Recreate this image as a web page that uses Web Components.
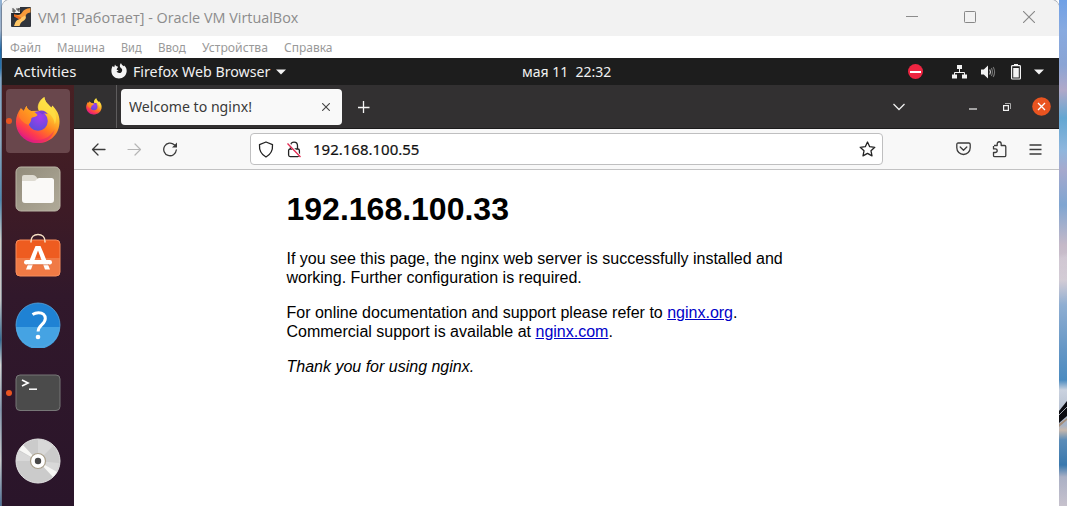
<!DOCTYPE html>
<html lang="ru">
<head>
<meta charset="utf-8">
<title>VM1 [Работает] - Oracle VM VirtualBox</title>
<style>html,body{margin:0;height:100%;overflow:hidden}</style>
</head>
<body>
<vm-desktop></vm-desktop>
<script>
const ICONS = {
  vbox: `<svg width="20" height="20" viewBox="0 0 20 20"><rect width="20" height="20" rx="1" fill="#30343c"/><path d="M1 6l8-3 4 4-2 3-5-1-4 2z" fill="#22252c"/><path d="M19.500 1v4.500c-2 .2-3.500.8-4.300 2.200-.8 1.600-1.700 3-3.700 3.300L6 10.500 3 7.500l4 .5c2 0 3-1 4-2.500C12.500 3 15 1.200 19.500 1z" fill="#f79a3a"/><path d="M14 8.500c1.200 1 1.200 2.500.2 3.800-1.500 1.800-3.700 2.200-4.700 4.200L8.500 19H3l1.300-3.500c1-2.300 3.200-2.500 4.500-3.900z" fill="#ffc766"/><path d="M3 7.300l5.500 2.200 1.500 1.700-1.500 1.300-5.500-3z" fill="#ed6a1d"/><path d="M0 0h9v6H0z" fill="#eee"/><path d="M2 1v4h2V3H2M6 1v2h2V1v4" fill="none" stroke="#333" stroke-width=".9"/></svg>`,
  min: `<svg width="12" height="12" viewBox="0 0 12 12"><path d="M0 5.500h12" stroke="#8c8c8c"/></svg>`,
  max: `<svg width="12" height="12" viewBox="0 0 12 12"><rect x=".5" y=".5" width="11" height="11" rx=".8" fill="none" stroke="#888"/></svg>`,
  close: `<svg width="12" height="12" viewBox="0 0 12 12"><path d="M0 0l12 12M12 0L0 12" stroke="#888" stroke-width="1.1"/></svg>`,
  ffmono: `<svg width="16" height="16" viewBox="0 0 16 16"><path d="M1.7 3.1l1.5 1.1L4 1.600c.7 1.500 1.700 2 3.200 2.200L5.600 6.200c.3.8 1.200 1 2 1-.7 1-1.400 1-2 .9.6 2.200 3.400 2.700 5 .8 1.300-1.900.4-3.300-1-4.200C8.500 3.500 8.600 1.500 10 0c.3 1.500 1.500 2.200 2.600 3.300l.5-.7C15 4.200 15.800 6 15.700 8.300 15.300 12.800 12.200 15.500 8 15.500 3.500 15.500.4 12.200.4 8c0-2 .5-3.500 1.300-4.900z" fill="#f4f4f4"/></svg>`,
  caret: `<svg width="10" height="6" viewBox="0 0 10 6"><path d="M0 .5h10L5 5.500z" fill="#f2f2f2"/></svg>`,
  dnd: `<svg width="16" height="16" viewBox="0 0 16 16"><circle cx="7.500" cy="7.500" r="7.500" fill="#ee2541"/><path d="M2 8h11" stroke="#fff" stroke-width="2"/></svg>`,
  net: `<svg width="15" height="14" viewBox="0 0 15 14"><path d="M7.500 4v4M2.500 10V7.500h10V10" fill="none" stroke="#f2f2f2"/><path d="M5 0h5v4H5zM0 9.500h5v4H0zM10 9.500h5v4h-5z" fill="#f2f2f2"/></svg>`,
  vol: `<svg width="15" height="14" viewBox="0 0 15 14"><path d="M0 4.500h2.800L7 .5v13L2.800 9.500H0z" fill="#f2f2f2"/><path d="M8.700 4.500q1.500 2.500 0 5" fill="none" stroke="#c8c8c8" stroke-width="1.200"/><path d="M10.400 3q2 4 0 8M12.200 2q2.800 5 0 10" fill="none" stroke="#777" stroke-width="1.100"/></svg>`,
  bat: `<svg width="10" height="16" viewBox="0 0 10 16"><path d="M3 0h4v1.500H3z" fill="#f2f2f2"/><rect x=".6" y="1.600" width="8.800" height="13.400" rx=".8" fill="none" stroke="#f2f2f2" stroke-width="1.200"/><path d="M2.200 4h5.600v9.500H2.200z" fill="#f2f2f2"/></svg>`,
  firefox: `<svg width="100%" height="100%" viewBox="0 0 46 48"><defs><linearGradient id="a" x1=".8" y1=".05" x2=".25" y2=".95"><stop offset="0" stop-color="#fff44f"/><stop offset=".32" stop-color="#ffbd2c"/><stop offset=".58" stop-color="#ff7a20"/><stop offset=".8" stop-color="#ff3d4c"/><stop offset="1" stop-color="#e01a86"/></linearGradient><radialGradient id="b" cx=".6" cy=".3" r=".75"><stop offset="0" stop-color="#a43cee"/><stop offset="1" stop-color="#5b4ed9"/></radialGradient><linearGradient id="c" x1="0" y1="1" x2="1" y2="0"><stop offset="0" stop-color="#ff6a2a"/><stop offset=".6" stop-color="#ff9a1f"/><stop offset="1" stop-color="#ffb82e"/></linearGradient></defs><path d="M5.500 11.500l3 2.700L11.200 9c.6 3 2.300 4.600 4.800 5.200L24 14c-2-5 1-11 5.500-14 .6 5 4 7.500 7.200 10.800l1-2C42 13.500 45 18 45 25c0 13-9.500 22-22 22S.5 38 .5 25.500c0-5.500 2-10.200 5-14z" fill="url(#a)"/><path d="M24 14c-3-3.500-.5-10.500 5.500-14 .6 5 4 7.500 7.200 10.800 5 5.200 5.800 11.200 3.500 17.200-1-8-6-14-16.200-14z" fill="#ffe047" opacity=".75"/><circle cx="23" cy="24.500" r="10" fill="url(#b)"/><path d="M23 14.500c5-2 9 1 10 3-2-1-4-1-5.500 0z" fill="#7a3fd8"/><path d="M5.500 11.500l3 2.700L11.200 9c.6 3 2.300 4.600 4.800 5.200 2.500.2 5.500 2 6.500 4.300-1 2.500-6 1.500-6.500 4 .3 2-1.500 5-3 6-2.800-1-8-4-9.500-9z" fill="url(#c)"/><path d="M2 30c3 10 12 14.500 21 14 8-.5 14-5 17-11-2 9-9 14-17.500 14C11 47 4 40 2 30z" fill="#d81b85" opacity=".4"/></svg>`,
  x: `<svg width="8" height="8" viewBox="0 0 8 8"><path d="M.2.2l7.600 7.600M7.800.2L.2 7.800" stroke="#444" stroke-width="1.100"/></svg>`,
  plus: `<svg width="12" height="12" viewBox="0 0 12 12"><path d="M5.500 0v12M0 6.500h11.500" stroke="#f5f5f5" stroke-width="1.300"/></svg>`,
  chev: `<svg width="14" height="8" viewBox="0 0 14 8"><path d="M1.500 1L7 6.500 12.500 1" fill="none" stroke="#eee" stroke-width="1.300"/></svg>`,
  wmin: `<svg width="8" height="2"><path d="M0 1h8" stroke="#f2f2f2" stroke-width="1.200"/></svg>`,
  wres: `<svg width="8" height="8" viewBox="0 0 8 8"><path d="M2 .5h5.500V6" fill="none" stroke="#aaa"/><rect x=".6" y="2.600" width="4.800" height="4.800" fill="none" stroke="#f2f2f2" stroke-width="1.200"/></svg>`,
  wclose: `<svg width="19" height="19" viewBox="0 0 19 19"><circle cx="9.500" cy="9.500" r="9.300" fill="#e95420"/><path d="M6 6l7 7M13 6l-7 7" stroke="#fff" stroke-width="1.300"/></svg>`,
  back: `<svg width="15" height="13" viewBox="0 0 15 13"><path d="M7 1L1.500 6.500 7 12M1.500 6.500H14" fill="none" stroke="#3b3b3b" stroke-width="1.300" stroke-linecap="round" stroke-linejoin="round"/></svg>`,
  fwd: `<svg width="15" height="13" viewBox="0 0 15 13"><path d="M8 1l5.500 5.500L8 12M13.500 6.500H1" fill="none" stroke="#b5b5b5" stroke-width="1.200" stroke-linecap="round" stroke-linejoin="round"/></svg>`,
  reload: `<svg width="16" height="16" viewBox="0 0 16 16"><path d="M12.300 3.800A6.300 6.300 0 1 0 14.300 9" fill="none" stroke="#3b3b3b" stroke-width="1.300" stroke-linecap="round"/><path d="M15 1.500v5H10z" fill="#3b3b3b"/></svg>`,
  shield: `<svg width="16" height="17" viewBox="0 0 16 17"><path d="M8 1l6.500 2.600c.4 5.500-1.500 9.700-6.500 12.400C3 13.300 1.100 9.100 1.500 3.600z" fill="none" stroke="#222" stroke-width="1.300" stroke-linejoin="round"/></svg>`,
  lock: `<svg width="16" height="17" viewBox="0 0 16 17"><rect x="2.600" y="8" width="10.800" height="7.600" rx="1.500" fill="none" stroke="#222" stroke-width="1.300"/><path d="M4.500 8V4.800c0-5 7-5 7 0V8" fill="none" stroke="#222" stroke-width="1.300"/><path d="M2 2l13 14" stroke="#fff" stroke-width="2.500"/><path d="M1.500 2.500l13 13.500" stroke="#e22850" stroke-width="1.300"/></svg>`,
  star: `<svg width="17" height="16" viewBox="0 0 17 16"><path d="M8.500 1l2.200 4.700 5.100.6-3.800 3.500 1 5.100-4.500-2.500L4 14.900l1-5.100L1.200 6.300l5.100-.6z" fill="none" stroke="#222" stroke-width="1.300" stroke-linejoin="round"/></svg>`,
  pocket: `<svg width="15" height="14" viewBox="0 0 15 14"><path d="M2.200 1h10.600q1.400 0 1.400 1.400v3.400a6.700 6.700 0 0 1-13.400 0V2.400Q.8 1 2.200 1z" fill="none" stroke="#3b3b3b" stroke-width="1.300"/><path d="M4.200 5l3.300 3.200L10.800 5" fill="none" stroke="#3b3b3b" stroke-width="1.300" stroke-linecap="round" stroke-linejoin="round"/></svg>`,
  ext: `<svg width="15" height="17" viewBox="0 0 15 17"><path d="M2 4.500h3.200V3c0-3 4-3 4 0v1.500h3.300q1.300 0 1.300 1.300v8.600q0 1.300-1.300 1.300H2.800Q1.500 15.700 1.500 14.400v-2.900h1.600c2.800 0 2.800-3.600 0-3.600H1.500V5" fill="none" stroke="#3b3b3b" stroke-width="1.300" stroke-linejoin="round"/></svg>`,
  menu: `<svg width="13" height="11" viewBox="0 0 13 11"><path d="M.5 1h12M.5 5.500h12M.5 10h12" stroke="#3b3b3b" stroke-width="1.300"/></svg>`,
  files: `<svg width="46" height="46" viewBox="0 0 46 46"><defs><linearGradient id="f" x1="0" y1="0" x2="1" y2="1"><stop offset="0" stop-color="#918b7b"/><stop offset="1" stop-color="#b0aa98"/></linearGradient></defs><rect x="1" y="1" width="44" height="44" rx="5" fill="url(#f)" stroke="#bbb5a6"/><path d="M7 16v-5q0-2 2-2h9q2 0 3 1.500l1.500 2V17z" fill="#dedbd2"/><path d="M7 15h12q1.500 0 2.500-1.500t2.500-1.500h12.500q2.500 0 2.500 2.500V34q0 3-3 3H10q-3 0-3-3z" fill="#faf9f7"/></svg>`,
  store: `<svg width="46" height="44" viewBox="0 0 46 44"><rect x="1" y="7" width="44" height="36" rx="4" fill="#ee5c20"/><path d="M1 25h44v14q0 4-4 4H5q-4 0-4-4z" fill="#f07a45"/><rect x="1" y="7" width="44" height="36" rx="4" fill="none" stroke="#f78e5e"/><path d="M16 9.500V8.500C16 4 19 1.500 23 1.500s7 2.500 7 7v1" fill="none" stroke="#f6dfc4" stroke-width="1.500"/><path d="M20.500 13h5l3.200 7.500L35 36.500h-5l-7-19-7 19h-5l6.300-16z" fill="#fff"/><rect x="9" y="27" width="28" height="4.500" rx="2.200" fill="#fff"/><path d="M12 31.800h22" stroke="#d9683a" stroke-width=".7"/></svg>`,
  help: `<svg width="46" height="46" viewBox="0 0 46 46"><circle cx="23" cy="23" r="22" fill="#1f82d4"/><path d="M1 25a22 22 0 0 0 44 0z" fill="#45a3e3"/><circle cx="23" cy="23" r="22" fill="none" stroke="#55a6df" stroke-width=".8"/><path d="M17.500 12.500q2.800-1.800 6-1.800c4.500 0 6.800 2.500 6.800 5.800 0 6-7.200 6.300-7.200 13" fill="none" stroke="#fff" stroke-width="3"/><circle cx="23" cy="35" r="2.300" fill="#fff"/></svg>`,
  term: `<svg width="46" height="38" viewBox="0 0 46 38"><rect x="1" y="1" width="44" height="35.500" rx="4" fill="#4b4b4b" stroke="#777"/><path d="M7 6l6 3-6 3" fill="none" stroke="#fff" stroke-width="1.700"/><path d="M14 15.200h8" stroke="#fff" stroke-width="1.500"/></svg>`,
  disc: `<svg width="46" height="46" viewBox="0 0 46 46"><circle cx="23" cy="23" r="22" fill="#cbcbcb" stroke="#e4e4e4"/><path d="M23 23L1.500 23A21.500 21.500 0 0 1 4 13zM23 23L23 1.500A21.500 21.500 0 0 1 38 8zM23 23L44 25A21.500 21.500 0 0 1 41 35z" fill="#d8d8d8"/><path d="M23 23L4 12l4-5zM23 23l19 11-4 5z" fill="#f7f7f5"/><circle cx="23" cy="23" r="7.500" fill="#fff" stroke="#aaa08c" stroke-width="1.200"/><circle cx="23" cy="23" r="3.200" fill="#484848"/></svg>`
};

const define = (name, html, ready) => {
  const t = document.createElement('template');
  t.innerHTML = html;
  customElements.define(name, class extends HTMLElement {
    constructor() { super(); this.attachShadow({mode: 'open'}).append(t.content.cloneNode(true)); }
    connectedCallback() { if (ready) ready(this); }
  });
};

/* Icon drawn from the shared set */
define('ui-icon', '', el => {
  el.shadowRoot.innerHTML = '<style>:host{display:block;flex:none;line-height:0}svg{display:block}</style>' + ICONS[el.getAttribute('name')];
});

/* Label that condenses or widens its text to a given width */
define('fit-label', `<style>:host{display:block;flex:none;white-space:pre}span{display:inline-block;transform-origin:0 50%}</style><span><slot></slot></span>`, el => {
  const w = +el.getAttribute('w'), s = el.shadowRoot.querySelector('span');
  el.style.width = w + 'px';
  s.style.transform = `scaleX(${w / s.offsetWidth})`;
});

define('host-titlebar', `<style>
:host{display:flex;align-items:center;height:36px;box-sizing:border-box;background:#f2f2f2;padding:0 24px 2px 9px;font:14.5px "Open Sans",sans-serif;color:#8c8c8c}
fit-label{margin:0 auto 0 7px}.b{display:flex;gap:47px}</style>
<ui-icon name="vbox"></ui-icon><fit-label w="260">VM1 [Работает] - Oracle VM VirtualBox</fit-label>
<div class="b"><ui-icon name="min" style="margin-right:-1px"></ui-icon><ui-icon name="max"></ui-icon><ui-icon name="close"></ui-icon></div>`);

define('host-menu', `<style>:host{display:flex;align-items:center;gap:16px;height:22px;padding:0 8px;background:#fff;font:12px "Noto Sans",sans-serif;color:#999}</style>
<fit-label w="31">Файл</fit-label><fit-label w="48">Машина</fit-label><fit-label w="21">Вид</fit-label><fit-label w="28">Ввод</fit-label><fit-label w="66">Устройства</fit-label><fit-label w="49">Справка</fit-label>`);

define('gnome-bar', `<style>:host{display:grid;grid-template-columns:508px 89px 1fr;align-items:center;height:27px;padding:0 15px 0 12px;background:#1d1d1d;font:14px "Noto Sans",sans-serif;color:#f0f0f0}
div{display:flex;align-items:center}.r{justify-content:flex-end}</style>
<div><fit-label w="62">Activities</fit-label><ui-icon name="ffmono" style="margin:0 6px 2px 35px"></ui-icon><fit-label w="137">Firefox Web Browser</fit-label><ui-icon name="caret" style="margin-left:6px"></ui-icon></div>
<fit-label w="89" style="margin-top:-1px">мая 11  22:32</fit-label>
<div class="r"><ui-icon name="dnd" style="margin-right:28px"></ui-icon><ui-icon name="net" style="margin-right:14px"></ui-icon><ui-icon name="vol" style="margin-right:15px"></ui-icon><ui-icon name="bat" style="margin-right:13px"></ui-icon><ui-icon name="caret"></ui-icon></div>`);

define('dock-item', `<style>:host{display:flex;position:relative;align-items:center;justify-content:center;width:64px;height:64px;flex:none;border-radius:4px}
:host([active]){background:#69474c}:host([running])::before{content:"";position:absolute;left:0;top:29px;width:6px;height:6px;border-radius:50%;background:#e95420}</style><slot></slot>`);

define('app-dock', `<style>:host{display:flex;flex-direction:column;align-items:center;gap:4px;width:72px;flex:none;box-sizing:border-box;padding-top:4px;background:linear-gradient(#482023,#3d1b26 30%,#31182b 50%,#2a152a);overflow:hidden}
.ff{width:46px;height:47px;margin-top:-2px}</style>
<dock-item active running><ui-icon name="firefox" class="ff"></ui-icon></dock-item>
<dock-item><ui-icon name="files"></ui-icon></dock-item>
<dock-item><ui-icon name="store" style="margin-top:-5px"></ui-icon></dock-item>
<dock-item><ui-icon name="help" style="margin-top:-1px"></ui-icon></dock-item>
<dock-item running><ui-icon name="term"></ui-icon></dock-item>
<dock-item><ui-icon name="disc"></ui-icon></dock-item>`);

define('browser-tabs', `<style>:host{display:flex;align-items:center;height:44px;box-sizing:border-box;border-bottom:1px solid #1c1b1c;background:#323031;padding-right:9px;font:14px "Noto Sans",sans-serif}
.pin{display:flex;align-items:center;justify-content:center;width:43px;height:100%;box-sizing:border-box;border-right:1px solid #5e5c5d;padding-right:2px}
.pin ui-icon{width:16px;height:17px}.tab{display:flex;align-items:center;justify-content:space-between;width:221px;height:36px;box-sizing:border-box;margin:0 16px 0 4px;padding:0 12px 0 8px;background:#f9f9f9;border-radius:4px;color:#3a3a3a}</style>
<div class="pin"><ui-icon name="firefox"></ui-icon></div>
<div class="tab"><fit-label w="123">Welcome to nginx!</fit-label><ui-icon name="x"></ui-icon></div>
<ui-icon name="plus" style="margin-right:auto"></ui-icon><ui-icon name="chev" style="margin-right:63px"></ui-icon><ui-icon name="wmin" style="margin:4px 26px 0 0"></ui-icon><ui-icon name="wres" style="margin-right:21px"></ui-icon><ui-icon name="wclose" style="margin-right:-1px"></ui-icon>`);

define('browser-toolbar', `<style>:host{display:flex;align-items:center;height:41px;box-sizing:border-box;border-bottom:1px solid #c2c2c3;background:#f8f8f8;padding:0 17px 0 17px}
.url{display:flex;align-items:center;width:633px;flex:none;height:32px;box-sizing:border-box;border:1px solid #bfbfc0;border-radius:4px;background:#fff;padding:0 6px 0 7px;margin:0 73px 0 72px;font:14px "Noto Sans",sans-serif;color:#111;-webkit-text-stroke:.2px #111}</style>
<ui-icon name="back"></ui-icon><ui-icon name="fwd" style="margin:0 20px 0 21px"></ui-icon><ui-icon name="reload"></ui-icon>
<div class="url"><ui-icon name="shield"></ui-icon><ui-icon name="lock" style="margin:0 11px 0 12px"></ui-icon><fit-label w="106">192.168.100.55</fit-label><ui-icon name="star" style="margin-left:auto"></ui-icon></div>
<ui-icon name="pocket" style="margin-right:21px"></ui-icon><ui-icon name="ext" style="margin-right:22px"></ui-icon><ui-icon name="menu"></ui-icon>`);

define('nginx-page', `<style>:host{display:block;flex:1;background:#fff;overflow:hidden;font:16px/19px "Liberation Sans",Arial,sans-serif;color:#000}
main{width:560px;margin:0 auto}h1{font-size:32px;line-height:37px;margin:21px 0}p{margin:0 0 16px}a{color:#0000c8}</style>
<main><h1>192.168.100.33</h1>
<p>If you see this page, the nginx web server is successfully installed and<br>working. Further configuration is required.</p>
<p>For online documentation and support please refer to <a href="#">nginx.org</a>.<br>Commercial support is available at <a href="#">nginx.com</a>.</p>
<p><em>Thank you for using nginx.</em></p></main>`);

define('vm-window', `<style>:host{display:flex;flex-direction:column;width:1057px;flex:none;height:506px;border-radius:8px 8px 0 0;overflow:hidden;background:#fff;box-shadow:0 0 0 1px #56606f88}
.body{display:flex;flex:1;min-height:0}.browser{display:flex;flex-direction:column;flex:1;min-width:0}</style>
<host-titlebar></host-titlebar><host-menu></host-menu><gnome-bar></gnome-bar>
<div class="body"><app-dock></app-dock><div class="browser"><browser-tabs></browser-tabs><browser-toolbar></browser-toolbar><nginx-page></nginx-page></div></div>`);

define('vm-desktop', `<style>:host{display:flex;width:1067px;height:506px;overflow:hidden}
.l{width:2px;background:linear-gradient(#8fb0d3,#9eb2cb 30px,#1e68a8 50px,#2774ae 68px,#7fa6c8 78px,#8fa9bf 140px,#4d86af 200px,#d0cdc8 240px,#c7c6c7 300px,#346992 340px,#d8d5d4 365px,#8797ae 410px,#cbc9cb 460px,#4d6f96)}
.r{flex:1;background:linear-gradient(165deg,transparent 50%,#ffffff22 51%,transparent 60%),linear-gradient(#6fa0e6,#88aae0 30px,#8aa4d4 65px,#b1a9c9 90px,#63a6d2 118px,#8fb6dd 150px,#a6a9cd 170px,#7fa5d1 205px,#c5b9c8 245px,#d0c8d2 280px,#8faed2 305px,#6496c5 350px,#4b8bc0 380px,#cad2df 390px,#a7b3c6 425px,#c7b8ad 430px,#5b8cb8 440px,#3978ad 465px,#aab0c5 477px,#c7c2cd)}
.r svg{display:block}</style><div class="l"></div><vm-window></vm-window><div class="r"><svg width="8" height="506"><path d="M0 411l8-10v15l-8 7z" fill="#0b0c12"/><path d="M0 415l8-8" stroke="#c8ccd6" stroke-width=".8"/><path d="M0 424l8-6v2l-8 7z" fill="#a58f7c"/></svg></div>`);
</script>
</body>
</html>
